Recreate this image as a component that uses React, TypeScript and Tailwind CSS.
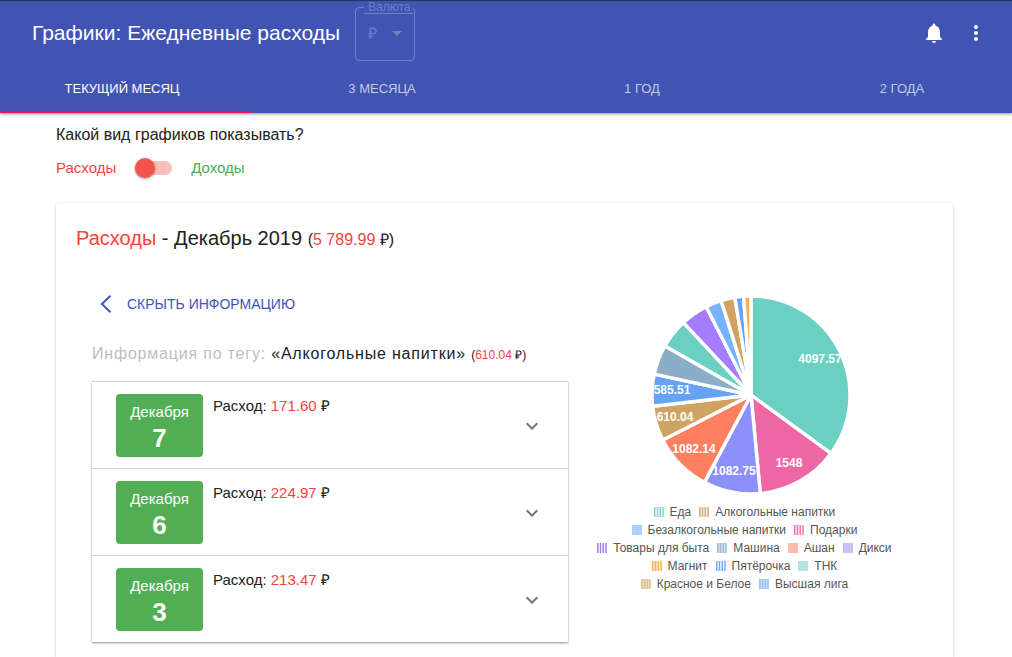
import { useState } from "react";

type Slice = { to: number; color: string };
const slices: Slice[] = [
  { to: 126.2, color: "#6bcfc2" },
  { to: 174.6, color: "#ee67a4" },
  { to: 208.1, color: "#8b90fb" },
  { to: 243, color: "#ff8061" },
  { to: 263.5, color: "#cfa462" },
  { to: 282.2, color: "#66a3f5" },
  { to: 299.7, color: "#8badc7" },
  { to: 317, color: "#6bcfc2" },
  { to: 333.1, color: "#a37dfd" },
  { to: 342.4, color: "#76b2fe" },
  { to: 350.6, color: "#cfa462" },
  { to: 355.7, color: "#66a3f5" },
  { to: 360, color: "#fdaf4d" },
];

const sliceLabels = [
  { x: 119, y: 68, text: "4097.57" },
  { x: 88, y: 172, text: "1548" },
  { x: 33, y: 180, text: "1082.75" },
  { x: -7, y: 158, text: "1082.14" },
  { x: -26, y: 126, text: "610.04" },
  { x: -29, y: 99, text: "585.51" },
];

function point(deg: number) {
  const a = (deg * Math.PI) / 180;
  return `${(50 + 99 * Math.sin(a)).toFixed(2)} ${(100 - 99 * Math.cos(a)).toFixed(2)}`;
}

function PieChart() {
  return (
    <svg className="h-[200px] w-[214px]" viewBox="-64 0 214 200" role="img" aria-label="Расходы по тегам">
      {slices.map((s, i) => {
        const from = i === 0 ? 0 : slices[i - 1].to;
        return (
          <path
            key={s.to}
            d={`M50 100 L${point(from)} A99 99 0 0 1 ${point(s.to)} Z`}
            fill={s.color}
            stroke="#fff"
            strokeWidth="3.4"
            strokeLinejoin="round"
          />
        );
      })}
      {sliceLabels.map((l) => (
        <text key={l.text} x={l.x} y={l.y} textAnchor="middle" fill="#fff" className="text-[12px] font-bold">
          {l.text}
        </text>
      ))}
    </svg>
  );
}

type Tag = { name: string; stripe: string; back: string };
const legend: Tag[][] = [
  [
    { name: "Еда", stripe: "#7dd4c8", back: "#f0faf9" },
    { name: "Алкогольные напитки", stripe: "#d4ae74", back: "#fbf6ef" },
  ],
  [
    { name: "Безалкогольные напитки", stripe: "#a9cdfb", back: "#b3d3fb" },
    { name: "Подарки", stripe: "#ee79ae", back: "#fdeff5" },
  ],
  [
    { name: "Товары для быта", stripe: "#a37dfd", back: "#fff" },
    { name: "Машина", stripe: "#a2bdd2", back: "#d5e1ea" },
    { name: "Ашан", stripe: "#ffb9a8", back: "#ffbfb0" },
    { name: "Дикси", stripe: "#b2b5fc", back: "#d6d8fd" },
  ],
  [
    { name: "Магнит", stripe: "#fdaf4d", back: "#fff3e3" },
    { name: "Пятёрочка", stripe: "#6aabfd", back: "#fff" },
    { name: "ТНК", stripe: "#aee6df", back: "#b5e8e1" },
  ],
  [
    { name: "Красное и Белое", stripe: "#dfc297", back: "#ecdcc4" },
    { name: "Высшая лига", stripe: "#9cc5fb", back: "#c3dcfd" },
  ],
];

function Swatch({ stripe, back }: { stripe: string; back: string }) {
  return (
    <svg className="size-[10px]" viewBox="0 0 10 10" aria-hidden="true">
      <rect width="10" height="10" fill={back} />
      <path d="M.75 0V10M3.5 0V10M6.25 0V10M9 0V10" stroke={stripe} strokeWidth="1.5" />
    </svg>
  );
}

const days = [
  { day: 7, sum: "171.60" },
  { day: 6, sum: "224.97" },
  { day: 3, sum: "213.47" },
];
const tabs = ["ТЕКУЩИЙ МЕСЯЦ", "3 МЕСЯЦА", "1 ГОД", "2 ГОДА"];

export default function App() {
  const [tab, setTab] = useState(0);
  const [income, setIncome] = useState(false);
  return (
    <div className="flex min-h-screen flex-col bg-white font-['Liberation_Sans',Arial,sans-serif] text-[#212121]">
      <header className="relative z-10 overflow-x-clip border-t border-[#1e3a5c] bg-[#4154b3] text-white shadow-[0_1px_3px_rgba(0,0,0,0.45)]">
        <div className="flex h-16 items-center pr-6 pl-8">
          <h1 className="text-[21px] leading-6 whitespace-nowrap">Графики: Ежедневные расходы</h1>
          <fieldset className="ml-[15px] h-[60px] w-[60px] self-start rounded border border-white/25 p-0 text-white/25">
            <legend className="ml-2 border-b border-white/25 pr-[3px] pl-1 text-[12px] leading-3">
              <label htmlFor="currency">Валюта</label>
            </legend>
            <div className="relative flex items-center">
              <select id="currency" disabled className="w-full appearance-none bg-transparent pt-[10px] pl-3 text-[16px] leading-5 opacity-100">
                <option>₽</option>
              </select>
              <svg className="pointer-events-none absolute top-[17px] right-3 h-[5px] w-[10px]" viewBox="0 0 10 5" fill="currentColor" aria-hidden="true">
                <path d="M0 0h10L5 5z" />
              </svg>
            </div>
          </fieldset>
          <div className="ml-auto flex items-center gap-[18px]">
            <button type="button" aria-label="Уведомления">
              <svg className="size-6" viewBox="0 0 24 24" fill="currentColor">
                <path d="M12 22c1.1 0 2-.9 2-2h-4c0 1.1.89 2 2 2zm6-6v-5c0-3.07-1.64-5.64-4.5-6.32V4c0-.83-.67-1.5-1.5-1.5s-1.5.67-1.5 1.5v.68C7.63 5.36 6 7.92 6 11v5l-2 2v1h16v-1l-2-2z" />
              </svg>
            </button>
            <button type="button" aria-label="Меню">
              <svg className="size-6" viewBox="0 0 24 24" fill="currentColor">
                <path d="M12 8c1.1 0 2-.9 2-2s-.9-2-2-2-2 .9-2 2 .9 2 2 2zm0 2c-1.1 0-2 .9-2 2s.9 2 2 2 2-.9 2-2-.9-2-2-2zm0 6c-1.1 0-2 .9-2 2s.9 2 2 2 2-.9 2-2-.9-2-2-2z" />
              </svg>
            </button>
          </div>
        </div>
        <nav className="-mr-5 -ml-2 grid grid-cols-4">
          {tabs.map((t, i) => (
            <button
              key={t}
              type="button"
              onClick={() => setTab(i)}
              className={
                i === tab
                  ? "h-12 border-b-2 border-[#f50f57] pt-0.5 text-[13px] font-medium text-white"
                  : "h-12 border-b-2 border-transparent pt-0.5 text-[13px] font-medium text-white/70"
              }
            >
              {t}
            </button>
          ))}
        </nav>
      </header>

      <main className="flex flex-1 flex-col pt-3 pr-[59px] pl-14">
        <p className="text-[16px] leading-5">Какой вид графиков показывать?</p>
        <label className="mt-[11px] flex items-center text-[15px] leading-6">
          <span className="text-[#f4443b]">Расходы</span>
          <input type="checkbox" className="peer sr-only" checked={income} onChange={() => setIncome(!income)} />
          <span className="mx-[19px] flex h-[14px] w-[37px] items-center rounded-full bg-[#fabdb9] peer-checked:justify-end peer-checked:bg-[#b7dfb9]">
            <span className="size-5 rounded-full bg-[#f5534b] shadow-[0_1px_3px_rgba(0,0,0,0.4)]" />
          </span>
          <span className="text-[#4cad50]">Доходы</span>
        </label>

        <section className="mt-[23px] flex-1 rounded-t px-5 pt-[19px] shadow-[0_1px_3px_rgba(0,0,0,0.25)]">
          <h2 className="text-[20px] leading-8">
            <span className="text-[#f4443b]">Расходы</span> - Декабрь 2019{" "}
            <span className="text-[16px]">
              (<span className="text-[#f4443b]">5 789.99</span> ₽)
            </span>
          </h2>
          <div className="mt-[30px] grid grid-cols-12">
            <div className="col-span-7 pr-2 pl-4">
              <button type="button" className="flex h-9 items-center gap-3 pl-2 text-[14px] text-[#4154b3]">
                <svg className="h-[18px] w-3" viewBox="0 0 12 18" fill="none" stroke="currentColor" strokeWidth="2" aria-hidden="true">
                  <path d="M10.5 .8 2 9l8.500 8.200" />
                </svg>
                <span className="pl-[3px]">СКРЫТЬ ИНФОРМАЦИЮ</span>
              </button>
              <h3 className="mt-5 text-[16px] leading-6 tracking-wider whitespace-nowrap">
                <span className="text-[#bdbdbd]">Информация по тегу:</span> «Алкогольные напитки»{" "}
                <span className="text-[12px] tracking-normal">
                  (<span className="text-[#f4443b]">610.04</span> ₽)
                </span>
              </h3>
              <ul className="mt-[14px] divide-y divide-[#d4d4d4] border-t border-[#d4d4d4] shadow-[0_1px_2px_rgba(0,0,0,0.45)]">
                {days.map((d) => (
                  <li key={d.day}>
                    <button type="button" className="flex w-full items-center px-6 pt-3 pb-[11px] text-left">
                      <span className="flex h-[63px] w-[87px] flex-col items-center rounded bg-[#51ae55] pt-2 text-white">
                        <span className="text-[15px] leading-5">Декабря</span>
                        <span className="text-[26px] leading-8 font-bold">{d.day}</span>
                      </span>
                      <span className="ml-[10px] self-start text-[15px] leading-6">
                        Расход: <span className="text-[#f4443b]">{d.sum}</span> ₽
                      </span>
                      <svg className="ml-auto size-6 text-[#757575]" viewBox="0 0 24 24" fill="currentColor" aria-hidden="true">
                        <path d="M7.410 8.590 12 13.170l4.590-4.580L18 10l-6 6-6-6z" />
                      </svg>
                    </button>
                  </li>
                ))}
              </ul>
            </div>
            <div className="col-span-5 flex flex-col items-center pt-[9px] pr-5">
              <PieChart />
              <div className="mt-2 text-[12px] leading-[18px] text-[#555]">
                {legend.map((row) => (
                  <ul key={row[0].name} className="flex justify-center gap-2">
                    {row.map((t) => (
                      <li key={t.name} className="flex items-center gap-[6px] whitespace-nowrap">
                        <Swatch stripe={t.stripe} back={t.back} />
                        {t.name}
                      </li>
                    ))}
                  </ul>
                ))}
              </div>
            </div>
          </div>
        </section>
      </main>
    </div>
  );
}
